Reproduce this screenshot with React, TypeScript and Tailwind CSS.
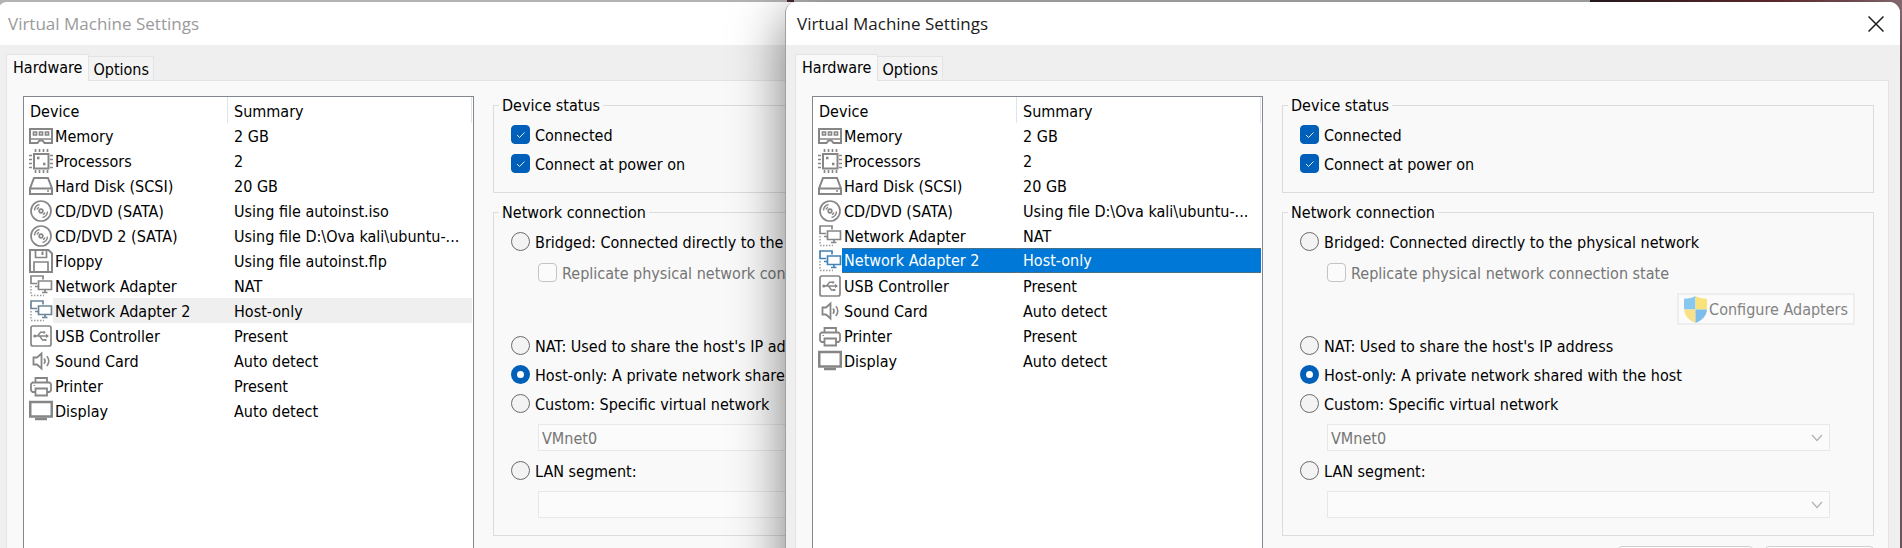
import { useId, useState } from "react";
import type { ReactNode } from "react";

type IconName =
  | "memory" | "cpu" | "disk" | "disc" | "floppy" | "network"
  | "usb" | "sound" | "printer" | "display";

interface Device {
  icon: IconName;
  name: string;
  summary: string;
}

const ICONS: Record<IconName, ReactNode> = {
  memory: (
    <>
      <path d="M1 5h22v14h-7.5l-2-2.5h-3l-2 2.5H1z" />
      <path d="M1 15h22" strokeWidth="1.5" />
      <path d="M4.5 8h3v3h-3zM10.5 8h3v3h-3zM16.5 8h3v3h-3z" strokeWidth="1.7" />
    </>
  ),
  cpu: (
    <>
      <rect x="5" y="5" width="14.5" height="14.5" />
      <path d="M6.5 0v3M10.5 0v3M14.5 0v3M18.5 0v3M6.5 21v3M10.5 21v3M14.5 21v3M18.5 21v3M0 6.5h3M0 10.5h3M0 14.5h3M0 18.5h3M21 6.5h3M21 10.5h3M21 14.5h3M21 18.5h3" strokeWidth="1.7" />
      <path d="M8 9h2.5M14 15h2.5" strokeWidth="2.5" />
    </>
  ),
  disk: (
    <>
      <path d="M5 4h14l4 10.5H1z" />
      <path d="M1 14.5v5.5h22v-5.5" />
      <path d="M18 17h2" strokeWidth="1.5" />
    </>
  ),
  disc: (
    <>
      <circle cx="12" cy="12" r="10" strokeWidth="1.7" />
      <circle cx="12" cy="12" r="1.8" strokeWidth="1.7" />
      <path d="M5.5 11.5a6.5 6.5 0 0 1 5-6M8 10.5A4.5 4.5 0 0 1 10 8.3M18.5 12.5a6.5 6.5 0 0 1-5 6M16 13.5a4.5 4.5 0 0 1-2 2.2" strokeWidth="1.4" />
    </>
  ),
  floppy: (
    <>
      <path d="M1 1h18.5L23 4.5V23H1z" />
      <path d="M6.5 1v7.5h11V1M5 23V13h14v10" strokeWidth="1.7" />
      <path d="M13.5 2.5v3.5" />
    </>
  ),
  network: (
    <>
      <path d="M8 9.5H2V2h12v3.5" strokeWidth="1.7" />
      <path d="M9.5 7h13v8.5h-13zM16 15.5v3M13 18.5h5.5M6 12.5h3" strokeWidth="1.7" />
      <g className="stroke-[#9a9a9a]" strokeWidth="1.5" strokeDasharray="1.5 1.5">
        <path d="M2 12v9M2 21.5h13" />
      </g>
    </>
  ),
  usb: (
    <>
      <rect x="2" y="2" width="20" height="20" rx="2" strokeWidth="1.7" />
      <path d="M5 12h13M8.5 12l3-3.7h3M10.5 12l3 4h2.5" strokeWidth="1.4" />
      <path d="M17 9.8l3 2.2-3 2.2z" fill="currentColor" stroke="none" />
      <circle cx="5.8" cy="12" r="1.6" fill="currentColor" stroke="none" />
      <path d="M14.2 7.2h2v2.2h-2zM15.2 14.9h2.2v2.2h-2.2z" fill="currentColor" stroke="none" />
    </>
  ),
  sound: (
    <>
      <path d="M4.5 8.5h3.5l4.5-4v15l-4.5-4H4.5z" strokeWidth="1.8" />
      <path d="M15 9.5a4 4 0 0 1 0 5.2M17.8 7.2a7 7 0 0 1 0 9.8" strokeWidth="1.6" />
    </>
  ),
  printer: (
    <>
      <path d="M6.5 8.5V4h11.5v4.500M6.5 18H3.5L2 16.5v-6.5l1.500-1.500h17L22 10v6.5L20.5 18h-2.5" strokeWidth="1.8" />
      <path d="M6.5 14.5h11.5v7H6.5z" strokeWidth="1.8" />
      <path d="M4.5 11.5h1.5" strokeWidth="1.2" />
    </>
  ),
  display: (
    <>
      <rect x="1.25" y="3" width="21.5" height="14.5" strokeWidth="2.5" />
      <path d="M6 20h12" strokeWidth="2.5" />
    </>
  ),
};

function DeviceIcon({ name, className }: { name: IconName; className: string }) {
  return (
    <svg viewBox="0 0 24 24" className={`ml-auto block size-6 ${className}`} fill="none" stroke="currentColor" strokeWidth="2" aria-hidden="true">
      {ICONS[name]}
    </svg>
  );
}

function DeviceList({ devices, selected, active }: { devices: Device[]; selected: string; active: boolean }) {
  const [current, setCurrent] = useState(selected);
  return (
    <div className="w-[451px] shrink-0 border border-[#828790] bg-white pr-px">
      <table className="w-full table-fixed border-separate border-spacing-0 text-left whitespace-nowrap">
        <colgroup>
          <col className="w-[29px]" />
          <col className="w-[175px]" />
          <col />
        </colgroup>
        <thead>
          <tr className="h-[26px]">
            <th colSpan={2} className="border-r border-[#dfe3ea] p-0 pt-[3px] pl-[6px] leading-[22px] font-normal">Device</th>
            <th className="border-r border-[#dfe3ea] p-0 pt-[3px] pl-[6px] leading-[22px] font-normal">Summary</th>
          </tr>
        </thead>
        <tbody>
          {devices.map((d) => {
            const isSelected = d.name === current;
            const fill = !isSelected
              ? "pt-[2px]"
              : active
                ? "pt-px bg-[#0078d7] text-white border-y border-dotted border-[#8a6a40]"
                : "pt-[2px] bg-[#efefef]";
            const tint = !isSelected ? "text-[#868686]" : active ? "text-[#4683b3]" : "text-[#6b8597]";
            return (
              <tr key={d.name} className="h-[25px] cursor-default" onClick={() => setCurrent(d.name)}>
                <td className="p-0"><DeviceIcon name={d.icon} className={tint} /></td>
                <td className={`pr-0 pb-0 pl-[2px] leading-[22px] ${fill}`}>{d.name}</td>
                <td className={`pr-0 pb-0 pl-[6px] leading-[22px] ${fill}`}>{d.summary}</td>
              </tr>
            );
          })}
        </tbody>
      </table>
    </div>
  );
}

function CheckBox({ label, checked = false, disabled = false }: { label: string; checked?: boolean; disabled?: boolean }) {
  return (
    <label className={`flex h-[29px] items-center gap-[5px] whitespace-nowrap ${disabled ? "text-[#757575]" : ""}`}>
      <span className="grid size-[19px] shrink-0">
        <input
          type="checkbox"
          defaultChecked={checked}
          disabled={disabled}
          className="peer col-start-1 row-start-1 size-[19px] appearance-none rounded-[4px] border border-[#767676] bg-[#f5f5f5] checked:border-[#005fb8] checked:bg-[#005fb8] disabled:border-[#c4c4c4] disabled:bg-[#fbfbfb]"
        />
        <svg viewBox="0 0 19 19" className="pointer-events-none col-start-1 row-start-1 hidden size-[19px] peer-checked:block" fill="none" stroke="#e4eef8" strokeWidth="1" aria-hidden="true">
          <path d="M6 10l2.500 2.500L13.500 7.500" />
        </svg>
      </span>
      <span className="pt-[2px]">{label}</span>
    </label>
  );
}

function RadioButton({ group, label, checked = false }: { group: string; label: string; checked?: boolean }) {
  return (
    <label className="flex h-[29px] items-center gap-[5px] whitespace-nowrap">
      <input
        type="radio"
        name={group}
        defaultChecked={checked}
        className="size-[19px] shrink-0 appearance-none rounded-full border border-[#6b6b6b] bg-[#f3f3f3] checked:border-[6px] checked:border-[#005fb8] checked:bg-white"
      />
      <span className="pt-[2px]">{label}</span>
    </label>
  );
}

function DropDown({ label, value }: { label: string; value: string }) {
  return (
    <div className="mt-[6px] mr-[43px] ml-[27px] grid">
      <select aria-label={label} disabled className="col-start-1 row-start-1 h-[27px] w-full appearance-none border border-[#e8e8e8] bg-[#fbfbfb] px-[3px] pt-[2px] text-[#757575] opacity-100">
        <option>{value}</option>
      </select>
      <svg viewBox="0 0 12 8" className="pointer-events-none col-start-1 row-start-1 mr-[7px] h-[8px] w-[12px] self-center justify-self-end" fill="none" stroke="#b4b4b4" strokeWidth="1.3" aria-hidden="true">
        <path d="M1 1l5 5.500L11 1" />
      </svg>
    </div>
  );
}

function Group({ title, className, children }: { title: string; className: string; children: ReactNode }) {
  return (
    <fieldset className={`min-w-0 border border-[#dcdcdc] pt-[5px] pl-[17px] ${className}`}>
      <legend className="-ml-[12px] px-[3px] pt-[2px] leading-[18px]">{title}</legend>
      {children}
    </fieldset>
  );
}

function Shield() {
  return (
    <svg viewBox="0 0 23 27" className="h-[27px] w-[23px] shrink-0" aria-hidden="true">
      <path d="M11.500 0C8.500 2 4.500 2.700 0 2.700V13.500h11.500z" fill="#86c8ef" />
      <path d="M11.500 0c3 2 7 2.700 11.500 2.700V13.500H11.500z" fill="#f9e27a" />
      <path d="M0 13.500C.5 20 5 24.500 11.500 27V13.500z" fill="#fbe08a" />
      <path d="M23 13.500C22.500 20 18 24.500 11.500 27V13.500z" fill="#7dbdec" />
    </svg>
  );
}

interface SettingsWindowProps {
  devices: Device[];
  selected: string;
  active: boolean;
  className: string;
}

function SettingsWindow({ devices, selected, active, className }: SettingsWindowProps) {
  const group = useId();
  return (
    <section className={`absolute top-[2px] -bottom-24 flex flex-col overflow-hidden rounded-t-[11px] bg-[#efefef] ${className}`}>
      <header className="flex h-[43px] shrink-0 items-center justify-between bg-white pr-[15px] pl-[11px]">
        <h1 className={`font-['Open_Sans',sans-serif] text-[17px] ${active ? "text-[#1b1b1b]" : "text-[#9a9a9a]"}`}>
          Virtual Machine Settings
        </h1>
        <button type="button" aria-label="Close" className="grid size-[18px] place-items-center">
          <svg viewBox="0 0 16 16" className="size-4" fill="none" stroke="#1b1b1b" strokeWidth="1.5" aria-hidden="true">
            <path d="M.5 .5l15 15M15.500 .5l-15 15" />
          </svg>
        </button>
      </header>
      <div className="flex min-h-0 grow flex-col pt-[9px] pr-[11px] pl-[9px]">
        <div role="tablist" className="flex items-end">
          <button type="button" role="tab" aria-selected="true" className="z-10 -mb-px h-[27px] rounded-t-[2px] border border-b-0 border-[#e3e3e3] bg-[#f9f9f9] px-[6px] leading-6">
            Hardware
          </button>
          <button type="button" role="tab" aria-selected="false" className="h-6 border border-b-0 border-l-0 border-[#e3e3e3] bg-[#f3f3f3] px-[4px] pt-[2px] leading-[22px]">
            Options
          </button>
        </div>
        <div className="flex min-h-0 grow gap-[19px] border border-[#e3e3e3] bg-[#f9f9f9] pt-[15px] pr-[14px] pl-[16px]">
          <DeviceList devices={devices} selected={selected} active={active} />
          <div className="-mt-px min-w-0 grow">
            <Group title="Device status" className="pb-[14px]">
              <CheckBox label="Connected" checked />
              <CheckBox label="Connect at power on" checked />
            </Group>
            <Group title="Network connection" className="mt-[9px] pb-[17px]">
              <RadioButton group={group} label="Bridged: Connected directly to the physical network" />
              <div className="mt-[2px] ml-[27px]">
                <CheckBox label="Replicate physical network connection state" disabled />
              </div>
              <div className="my-[6px] mr-[18px] flex justify-end">
                <button type="button" disabled className="flex h-8 items-center gap-[2px] border-2 border-[#eeeeee] bg-[#fbfbfb] px-[5px] text-[#838383]">
                  <Shield />
                  <span className="pt-[2px]">Configure Adapters</span>
                </button>
              </div>
              <RadioButton group={group} label="NAT: Used to share the host's IP address" />
              <RadioButton group={group} label="Host-only: A private network shared with the host" checked />
              <RadioButton group={group} label="Custom: Specific virtual network" />
              <DropDown label="Virtual network" value="VMnet0" />
              <div className="mt-[5px]">
                <RadioButton group={group} label="LAN segment:" />
              </div>
              <DropDown label="LAN segment" value="" />
            </Group>
            <div className="mt-[10px] flex justify-end gap-[12px]">
              <button type="button" aria-label="LAN Segments" className="h-8 w-[135px] rounded-[4px] border border-[#d0d0d0] bg-[#fdfdfd]" />
              <button type="button" aria-label="Advanced" className="h-8 w-[109px] rounded-[4px] border border-[#d0d0d0] bg-[#fdfdfd]" />
            </div>
          </div>
        </div>
      </div>
    </section>
  );
}

const BACK_DEVICES: Device[] = [
  { icon: "memory", name: "Memory", summary: "2 GB" },
  { icon: "cpu", name: "Processors", summary: "2" },
  { icon: "disk", name: "Hard Disk (SCSI)", summary: "20 GB" },
  { icon: "disc", name: "CD/DVD (SATA)", summary: "Using file autoinst.iso" },
  { icon: "disc", name: "CD/DVD 2 (SATA)", summary: "Using file D:\\Ova kali\\ubuntu-..." },
  { icon: "floppy", name: "Floppy", summary: "Using file autoinst.flp" },
  { icon: "network", name: "Network Adapter", summary: "NAT" },
  { icon: "network", name: "Network Adapter 2", summary: "Host-only" },
  { icon: "usb", name: "USB Controller", summary: "Present" },
  { icon: "sound", name: "Sound Card", summary: "Auto detect" },
  { icon: "printer", name: "Printer", summary: "Present" },
  { icon: "display", name: "Display", summary: "Auto detect" },
];

const FRONT_DEVICES: Device[] = [
  { icon: "memory", name: "Memory", summary: "2 GB" },
  { icon: "cpu", name: "Processors", summary: "2" },
  { icon: "disk", name: "Hard Disk (SCSI)", summary: "20 GB" },
  { icon: "disc", name: "CD/DVD (SATA)", summary: "Using file D:\\Ova kali\\ubuntu-..." },
  { icon: "network", name: "Network Adapter", summary: "NAT" },
  { icon: "network", name: "Network Adapter 2", summary: "Host-only" },
  { icon: "usb", name: "USB Controller", summary: "Present" },
  { icon: "sound", name: "Sound Card", summary: "Auto detect" },
  { icon: "printer", name: "Printer", summary: "Present" },
  { icon: "display", name: "Display", summary: "Auto detect" },
];

export default function App() {
  return (
    <main className="relative h-screen overflow-hidden bg-[linear-gradient(90deg,#b3b3b3_0,#b3b3b3_787px,#4a2630_787px,#4a2630_794px,#b3b3b3_794px,#b3b3b3_1590px,#2b1c20_1590px,#6b2f33_1780px,#8c7078_100%)] font-['DejaVu_Sans_Condensed','DejaVu_Sans',sans-serif] text-[16px] text-black">
      <SettingsWindow
        devices={BACK_DEVICES}
        selected="Network Adapter 2"
        active={false}
        className="-left-[4px] w-[1116px] border-l border-[#a8a8a8]"
      />
      <SettingsWindow
        devices={FRONT_DEVICES}
        selected="Network Adapter 2"
        active
        className="right-[2px] left-[785px] border-l border-[#a0a0a0] shadow-[0_14px_52px_rgba(0,0,0,0.5)]"
      />
    </main>
  );
}
